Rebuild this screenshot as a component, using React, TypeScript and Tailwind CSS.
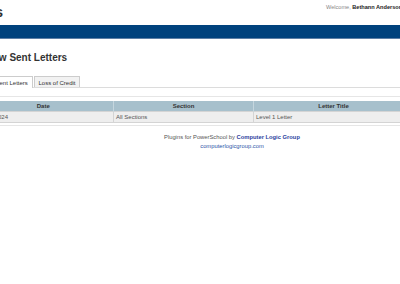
import React from "react";

const rows = [{ date: "01/15/2024", section: "All Sections", title: "Level 1 Letter" }];

export default function App() {
  return (
    <div className="w-[400px] h-[284px] overflow-hidden bg-white font-['Liberation_Sans',Arial,sans-serif] text-[#333]">
      {/* top strip */}
      <div className="flex h-[25px] whitespace-nowrap">
        <div className="ml-[-47px] mt-[3px] w-[60px] shrink-0 text-[15px] font-bold leading-[18px] text-[#333]">Letters</div>
        <div className="ml-[313px] mt-[3px] shrink-0 text-[5.6px] leading-[8px]">
          <span className="text-[#888]">Welcome, </span>
          <span className="font-bold text-[#222]">Bethann Anderson</span>
        </div>
      </div>
      <div className="h-[14px] bg-[#00427d] border-b border-[#5d7fa6]" />

      {/* page title */}
      <h1 className="mt-[13px] ml-[-16px] whitespace-nowrap text-[10px] font-bold leading-[12px] text-[#333]">
        View Sent Letters
      </h1>

      {/* tabs */}
      <div className="mt-[12px] flex h-[12px] items-end border-b border-[#dcdcdc] text-[6px] leading-[10px] whitespace-nowrap">
        <div className="ml-[-18px] h-[12px] w-[51px] shrink-0 border border-b-0 border-[#ccc] bg-white pt-[1px] text-center text-[#333] mb-[-1px]">
          All Sent Letters
        </div>
        <div className="ml-[1px] h-[11px] w-[46px] shrink-0 border border-b-0 border-[#ccc] bg-[#f2f2f2] pt-[1px] text-center text-[#333]">
          Loss of Credit
        </div>
      </div>

      {/* content */}
      <div className="mt-[8px] border-t border-[#e6e6e6] pt-[4px] pb-[2px] border-b">
        <table className="ml-[-27px] w-[500px] border-collapse text-[6px] leading-[10px] whitespace-nowrap">
          <thead>
            <tr className="bg-[#a7c0cc] text-[#333]">
              <th className="w-[140px] border-r border-[#c5d6de] font-bold">Date</th>
              <th className="w-[140px] border-r border-[#c5d6de] font-bold">Section</th>
              <th className="w-[160px] border-r border-[#c5d6de] font-bold">Letter Title</th>
              <th className="font-bold"></th>
            </tr>
          </thead>
          <tbody>
            {rows.map((r, i) => (
              <tr key={i} className="h-[11px] bg-[#eeeeee] text-[#555]">
                <td className="border border-[#d4d4d4] pl-[4px]">{r.date}</td>
                <td className="border border-[#d4d4d4] pl-[2px]">{r.section}</td>
                <td className="border border-[#d4d4d4] pl-[2px]">{r.title}</td>
                <td className="border border-[#d4d4d4]"></td>
              </tr>
            ))}
          </tbody>
        </table>
      </div>

      {/* footer */}
      <div className="mt-[7px] w-[464px] text-center text-[5.8px] leading-[9px] whitespace-nowrap">
        <div className="text-[#555]">
          Plugins for PowerSchool by <span className="font-bold text-[#2b3f9e]">Computer Logic Group</span>
        </div>
        <div className="text-[#2b54a8]">computerlogicgroup.com</div>
      </div>
    </div>
  );
}
